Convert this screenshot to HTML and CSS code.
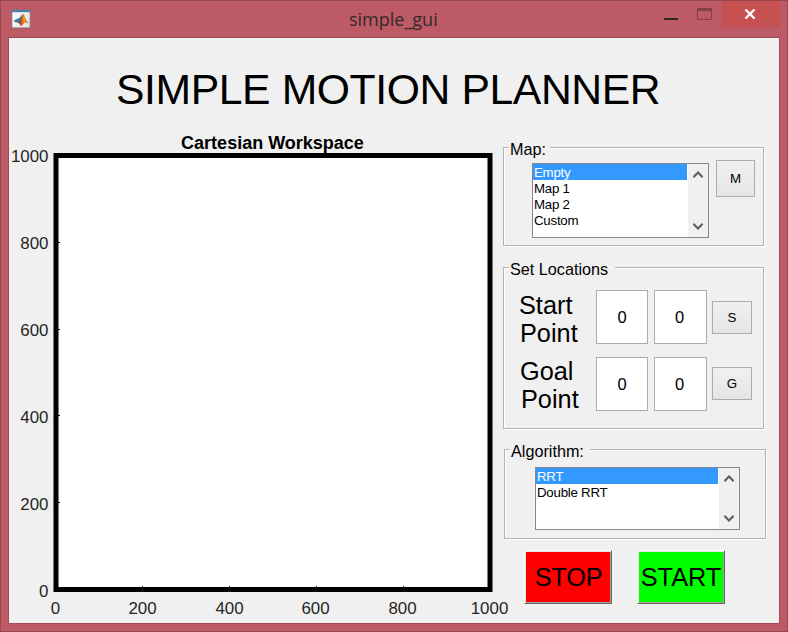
FILE: index.html
```html
<!DOCTYPE html>
<html lang="en">
<head>
<meta charset="utf-8">
<title>simple_gui</title>
<link rel="stylesheet" href="styles.css">
</head>
<body>
<div class="window">
  <header class="titlebar">
    <svg class="app-icon" width="20" height="20" viewBox="0 0 20 20">
      <defs>
        <linearGradient id="page" x1="0" y1="0" x2="1" y2="1"><stop offset="0" stop-color="#fff"/><stop offset="1" stop-color="#dcdfe3"/></linearGradient>
        <linearGradient id="peak" x1="0" y1="0" x2="1" y2="0"><stop offset="0" stop-color="#7a2418"/><stop offset=".45" stop-color="#e8701c"/><stop offset=".6" stop-color="#f0a030"/><stop offset="1" stop-color="#b03418"/></linearGradient>
      </defs>
      <rect x=".8" y=".8" width="18.4" height="18.2" fill="url(#page)" stroke="#94616b"/>
      <rect x="1" y="1" width="18" height="2.2" fill="#4b7fa5"/>
      <path d="M2.5 11.8 6.5 9.8 8.5 9 11.6 5 10.5 10 7.5 14.2 6.3 13.2 5 13.5Z" fill="#2d79ae"/>
      <path d="M7.3 14 9.3 10.5 12 4.8C13.5 5 14.5 10.5 17.5 14.8 15.5 13 14.2 13 12.5 15 11.2 16.7 10 17.2 9.5 16.8 9 15 8.3 14 7.3 14Z" fill="url(#peak)"/>
    </svg>
    <span class="caption">simple_gui</span>
    <svg class="win-min" width="14" height="2" viewBox="0 0 14 2"><rect width="14" height="2" fill="#2e2629"/></svg>
    <svg class="win-max" width="15" height="12" viewBox="0 0 15 12"><path d="M.5 .5H14.500V11.500H.5Z" fill="none" stroke="#7c4249"/><rect width="15" height="3" fill="#7c4249"/></svg>
    <div class="win-close"><svg width="12" height="10" viewBox="0 0 12 10"><path d="M1.500 .5 10.500 9.500M10.500 .5 1.500 9.500" stroke="#fff" stroke-width="2.300"/></svg></div>
  </header>

  <main class="client">
    <h1 class="heading">SIMPLE MOTION PLANNER</h1>
    <div class="columns">
      <svg class="plot" width="494" height="493" viewBox="9 130 494 493">
        <text class="plot-title" x="272.500" y="149" text-anchor="middle">Cartesian Workspace</text>
        <rect x="56" y="155.500" width="434" height="434" fill="#fff" stroke="#000" stroke-width="5"/>
        <path d="M58 242.500h2M58 329.500h2M58 415.500h2M58 502.500h2M142.500 587v-1M229.500 587v-1M316.500 587v-1M403.500 587v-1" stroke="#000" class="ticks"/>
        <g class="tick-labels" text-anchor="end">
          <text x="48.500" y="162">1000</text>
          <text x="48.500" y="249">800</text>
          <text x="48.500" y="336">600</text>
          <text x="48.500" y="423">400</text>
          <text x="48.500" y="510">200</text>
          <text x="48.500" y="597">0</text>
        </g>
        <g class="tick-labels" text-anchor="middle">
          <text x="55.500" y="614">0</text>
          <text x="142.500" y="614">200</text>
          <text x="229.500" y="614">400</text>
          <text x="315.500" y="614">600</text>
          <text x="402.500" y="614">800</text>
          <text x="489.500" y="614">1000</text>
        </g>
      </svg>

      <div class="side">
        <section class="panel map-panel">
          <h2 class="legend">Map:</h2>
          <div class="listbox">
            <ul class="items"><li class="selected">Empty</li><li>Map 1</li><li>Map 2</li><li>Custom</li></ul>
            <div class="scroll">
              <svg width="10" height="7" viewBox="0 0 10 7"><path d="M.4 6.200 5 1.600 9.600 6.200" fill="none" stroke="#606060" stroke-width="2.100"/></svg>
              <svg width="10" height="7" viewBox="0 0 10 7"><path d="M.4 .8 5 5.400 9.600 .8" fill="none" stroke="#606060" stroke-width="2.100"/></svg>
            </div>
          </div>
          <button class="push">M</button>
        </section>

        <section class="panel loc-panel">
          <h2 class="legend">Set Locations</h2>
          <div class="row">
            <div class="point">Start<br><span class="second">Point</span></div>
            <div class="edit">0</div><div class="edit wide">0</div>
            <button class="push">S</button>
          </div>
          <div class="row goal">
            <div class="point">Goal<br><span class="second">Point</span></div>
            <div class="edit">0</div><div class="edit wide">0</div>
            <button class="push">G</button>
          </div>
        </section>

        <section class="panel algo-panel">
          <h2 class="legend">Algorithm:</h2>
          <div class="listbox">
            <ul class="items"><li class="selected">RRT</li><li>Double RRT</li></ul>
            <div class="scroll">
              <svg width="10" height="7" viewBox="0 0 10 7"><path d="M.4 6.200 5 1.600 9.600 6.200" fill="none" stroke="#606060" stroke-width="2.100"/></svg>
              <svg width="10" height="7" viewBox="0 0 10 7"><path d="M.4 .8 5 5.400 9.600 .8" fill="none" stroke="#606060" stroke-width="2.100"/></svg>
            </div>
          </div>
        </section>

        <div class="actions">
          <button class="action stop">STOP</button>
          <button class="action start">START</button>
        </div>
      </div>
    </div>
  </main>
</div>
</body>
</html>
```

FILE: styles.css
```css
* { box-sizing: border-box; }
body { margin: 0; font-family: "Liberation Sans", Arial, sans-serif; color: #000; }
h1, h2, ul { margin: 0; padding: 0; font-weight: normal; }
ul { list-style: none; }
button { font-family: inherit; color: #000; padding: 0; border-radius: 0; }

.window {
  width: 788px; height: 632px;
  background: #bc5a65;
  border: 1px solid #96484f;
  padding: 0 7px 7px;
}
.titlebar { height: 36px; display: flex; align-items: flex-start; padding-left: 3px; }
.app-icon { margin-top: 8px; }
.caption {
  width: 93px; margin: 6px 0 0 318px;
  font: 18px/24px "Open Sans", "Noto Sans", sans-serif;
  color: #33292b; white-space: nowrap;
}
.win-min { margin: 17px 0 0 222px; }
.win-max { margin: 7px 0 0 19px; }
.win-close {
  width: 58px; height: 26px; margin-left: 10px; padding: 8px 2px 0 0;
  background: #c75050; flex: none;
  display: flex; justify-content: center;
}

.client { width: 772px; height: 587px; background: #f0f0f0; border: 1px solid #a04c56; }
.heading {
  height: 92px; padding-left: 107px;
  font-size: 42.7px; line-height: 103px; letter-spacing: -.4px; white-space: nowrap;
}
.columns { display: flex; height: 493px; }
.plot { flex: none; overflow: visible; }
.plot-title { font-size: 18px; font-weight: bold; }
.tick-labels { font-size: 16.900px; fill: #262626; }
.ticks { stroke-width: 1; }

.side { width: 276px; flex: none; }
.panel {
  width: 261px; border: 1px solid #b2b2b2;
  box-shadow: 1px 1px 0 #fff, inset 1px 1px 0 #fff;
}
.legend {
  width: max-content; height: 18px; margin: -8px 0 0 5px; padding: 0 6px 0 1px;
  font-size: 16.2px; line-height: 18px; background: #f0f0f0; flex: none; white-space: nowrap;
}
.map-panel { height: 99px; margin-top: 17px; display: flex; }
.map-panel .legend { width: 41px; }
.map-panel .listbox { width: 177px; height: 75px; margin: 15px 0 0 -18px; }
.map-panel .push { width: 39px; height: 37px; margin: 12px 0 0 7px; }

.listbox { display: flex; flex: none; background: #fff; border: 1px solid #828790; }
.items { flex: 1; margin-right: 1px; font-size: 13.3px; line-height: 17px; letter-spacing: -.25px; }
.items li { height: 16px; padding-left: 1px; }
.items .selected { background: #3399ff; color: #fff; }
.scroll {
  width: 20px; background: #f0f0f0; padding: 7px 1px 7px 0;
  display: flex; flex-direction: column; justify-content: space-between; align-items: center;
}
.push {
  border: 1px solid #acacac; flex: none;
  background: linear-gradient(#f0f0f0, #e5e5e5); font-size: 13.3px;
}

.loc-panel { height: 162px; margin-top: 21px; }
.loc-panel .legend { width: 106px; }
.row { display: flex; height: 54px; margin-top: 12px; padding-left: 15px; }
.goal { margin-top: 13px; }
.point { width: 77px; font-size: 25.3px; line-height: 28px; margin-top: 1px; }
.second { padding-left: 1px; }
.goal .point { padding-left: 1px; margin-top: 0; }
.edit {
  width: 52px; height: 54px; margin-right: 6px; padding-top: 1px;
  border: 1px solid #abadb3; background: #fff;
  display: flex; align-items: center; justify-content: center; font-size: 16.5px;
}
.edit.wide { width: 53px; margin-right: 5px; padding-right: 2px; }
.row .push { width: 40px; height: 33px; margin-top: 11px; }
.goal .push { margin-top: 10px; }

.algo-panel { width: 262px; height: 90px; margin: 20px 0 0 1px; }
.algo-panel .legend { width: 80px; }
.algo-panel .listbox { width: 205px; height: 63px; margin: 7px 0 0 30px; }

.actions { display: flex; gap: 25px; margin: 11px 0 0 21px; }
.action {
  width: 88px; height: 54px; font-size: 25.3px; line-height: 50px; white-space: nowrap;
  border: 1px solid; border-color: #fff #696969 #696969 #fff;
  box-shadow: inset 1px 1px 0 #e3e3e3, inset -1px -1px 0 #a0a0a0;
}
.stop { background: #f00; padding-left: 1px; letter-spacing: -.2px; }
.start { background: #0f0; }
```
